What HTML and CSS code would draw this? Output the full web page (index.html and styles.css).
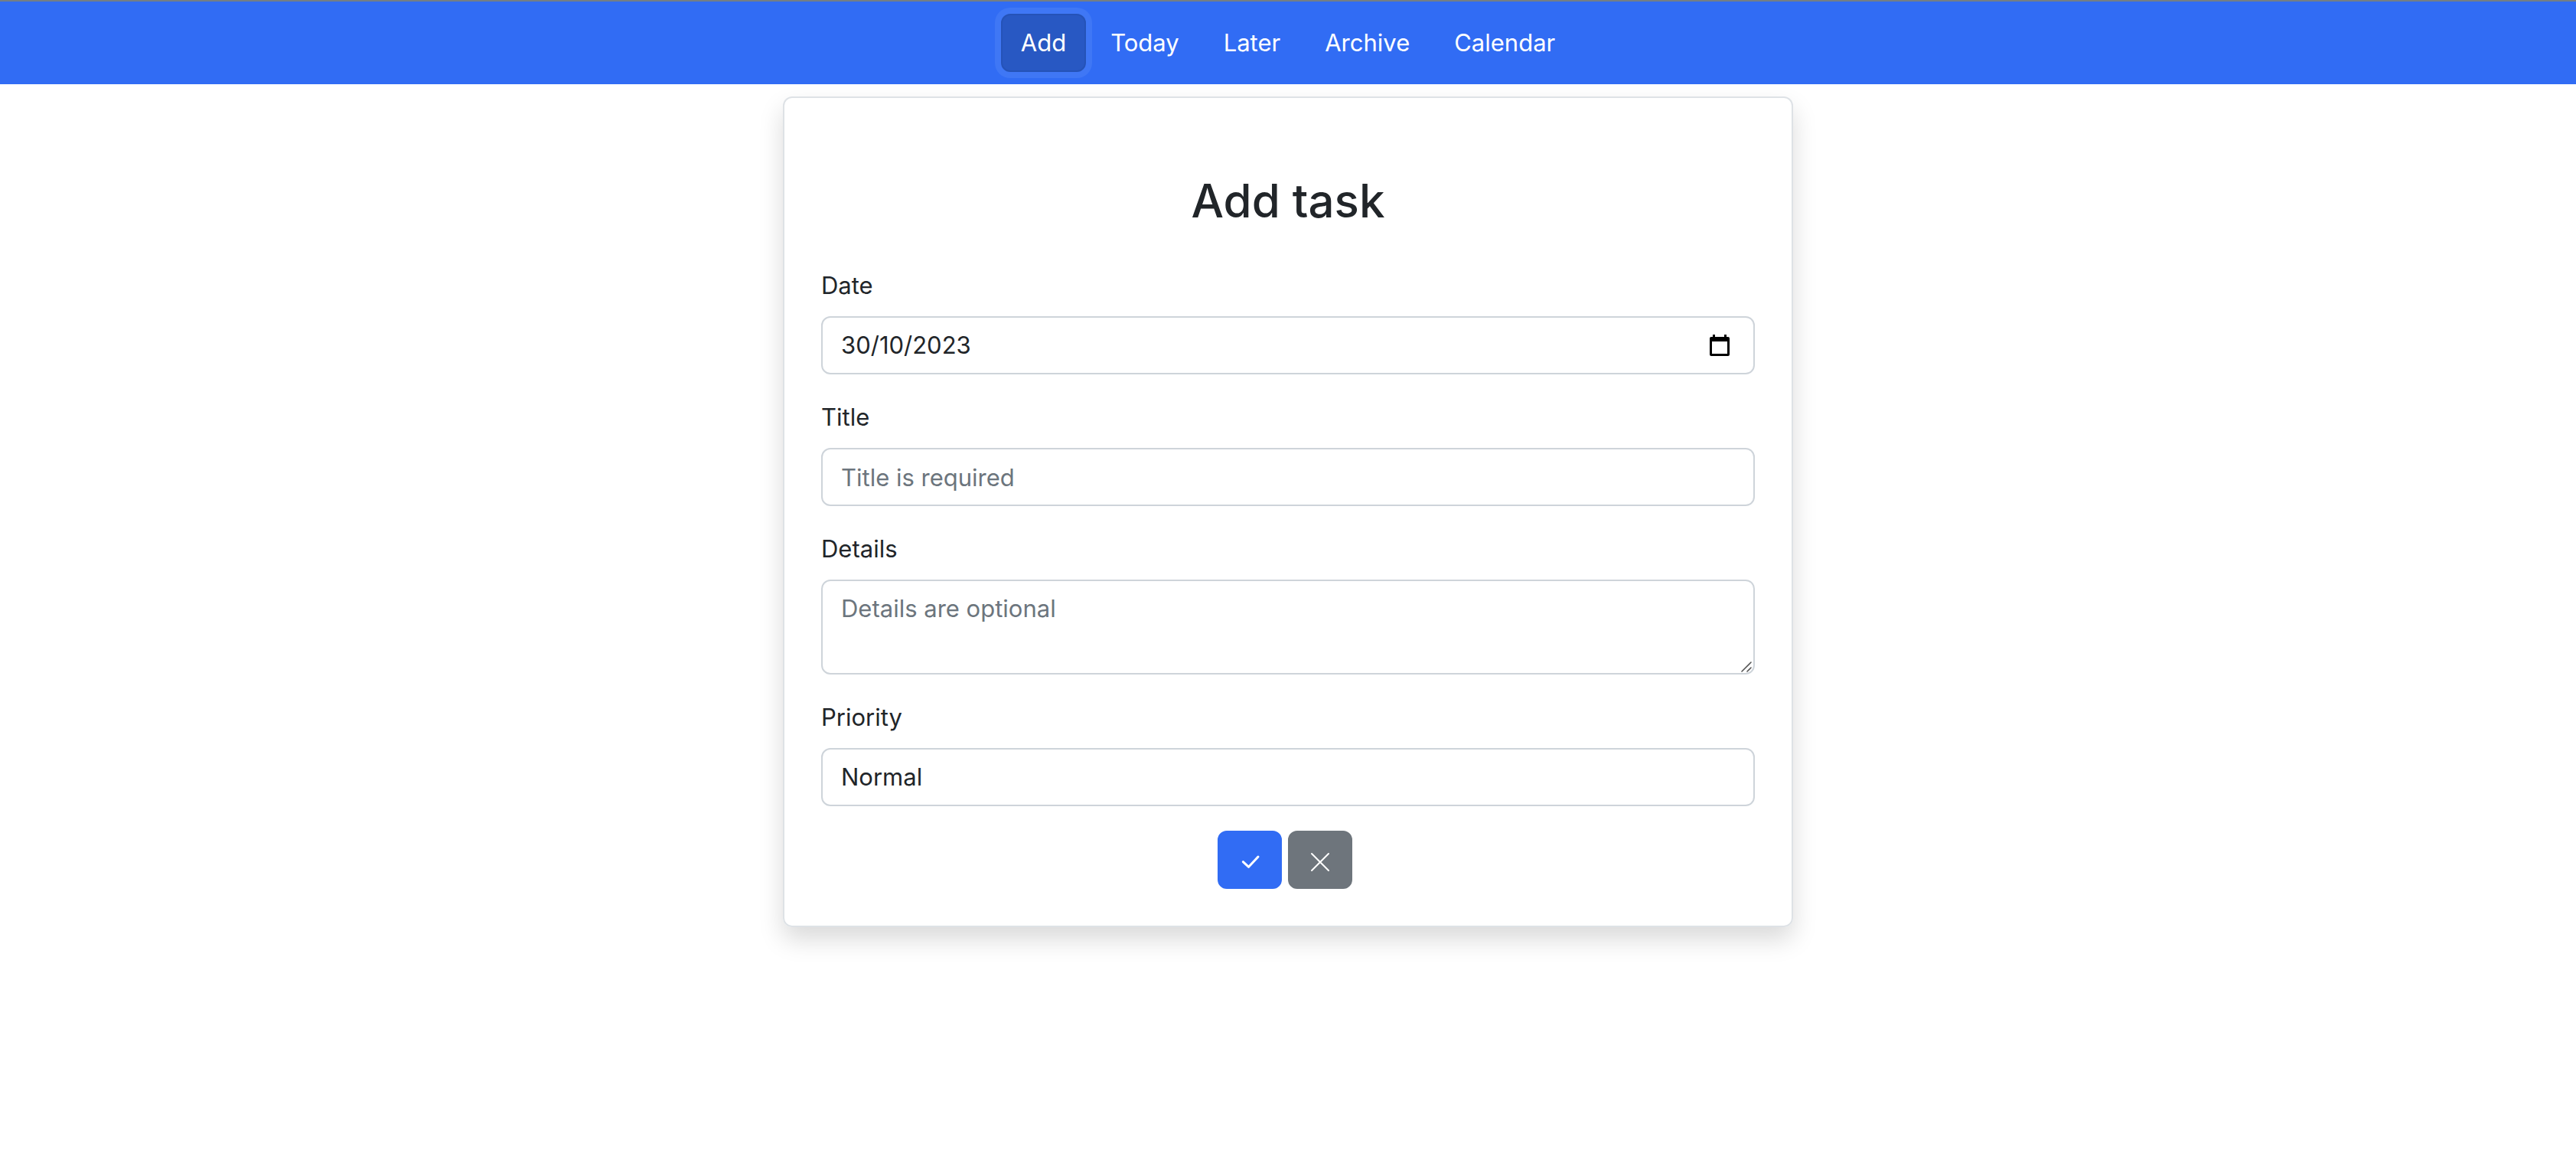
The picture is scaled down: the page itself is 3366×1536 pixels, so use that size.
FILE: index.html
```html
<!DOCTYPE html>
<html lang="en-GB">
<head>
<meta charset="utf-8">
<meta name="viewport" content="width=device-width, initial-scale=1">
<title>Add task</title>
<link rel="stylesheet" href="styles.css">
</head>
<body>
<nav class="navbar">
  <a class="nav-link active" href="#add" aria-current="page">Add</a>
  <a class="nav-link" href="#today">Today</a>
  <a class="nav-link" href="#later">Later</a>
  <a class="nav-link" href="#archive">Archive</a>
  <a class="nav-link" href="#calendar">Calendar</a>
</nav>
<main class="card">
  <h1 class="title">Add task</h1>
  <form class="form">
    <div class="field">
      <label class="label" for="date">Date</label>
      <div class="control date-group">
        <input class="date-input" id="date" type="text" value="30/10/2023">
        <button class="picker" type="button" aria-label="Show date picker">
          <svg width="26" height="28" viewBox="0 0 26 28" aria-hidden="true">
            <path fill="#000" fill-rule="evenodd" d="M4 0h3v3h12V0h3v3h2a2 2 0 0 1 2 2v21a2 2 0 0 1-2 2H2a2 2 0 0 1-2-2V5a2 2 0 0 1 2-2h2zM3 9v16h20V9z"/>
          </svg>
        </button>
      </div>
    </div>
    <div class="field">
      <label class="label" for="title">Title</label>
      <input class="control" id="title" type="text" placeholder="Title is required">
    </div>
    <div class="field">
      <label class="label" for="details">Details</label>
      <div class="area-wrap">
        <textarea class="control area" id="details" rows="2" placeholder="Details are optional"></textarea>
        <svg class="grip" width="14" height="14" viewBox="0 0 14 14" aria-hidden="true">
          <path d="M1 13 13 1M8 13l5-5" fill="none" stroke="#555" stroke-width="1.6" stroke-linecap="round"/>
        </svg>
      </div>
    </div>
    <div class="field">
      <label class="label" for="priority">Priority</label>
      <select class="control" id="priority">
        <option>Normal</option>
      </select>
    </div>
    <div class="actions">
      <button class="btn btn-primary" type="submit" aria-label="Save">
        <svg width="32" height="32" viewBox="0 0 32 32" aria-hidden="true">
          <path d="M7.300 18.700 14.600 25.300 27 12" fill="none" stroke="#fff" stroke-width="3" stroke-linecap="round" stroke-linejoin="round"/>
        </svg>
      </button>
      <button class="btn btn-secondary" type="button" aria-label="Cancel">
        <svg width="32" height="32" viewBox="0 0 32 32" aria-hidden="true">
          <path d="M5 8 27 30M27 8 5 30" fill="none" stroke="#fff" stroke-width="2" stroke-linecap="round"/>
        </svg>
      </button>
    </div>
  </form>
</main>
</body>
</html>
```
FILE: styles.css
```css
* {
  box-sizing: border-box;
}

body {
  min-height: 100vh;
  margin: 0;
  background: #fff;
  color: #212529;
  font-family: Inter, "Liberation Sans", sans-serif;
  font-size: 31px;
  line-height: 48px;
}

.navbar {
  display: flex;
  justify-content: center;
  gap: 6px;
  padding: 16px;
  border-top: 2px solid #747e84;
  background: #316cf4;
}

.nav-link {
  padding: 12px 24px;
  border: 2px solid transparent;
  border-radius: 12px;
  color: #fff;
  text-decoration: none;
}

.nav-link.active {
  background: #2858c3;
  border-color: #2553b8;
  box-shadow: 0 0 0 8px #3f77f5;
}

.card {
  width: 100%;
  max-width: 1320px;
  margin: 16px auto;
  padding: 48px;
  border: 2px solid #dee2e6;
  border-radius: 12px;
  box-shadow: 0 16px 32px rgba(0, 0, 0, 0.15);
}

.title {
  margin: 48px 0;
  font-size: 60px;
  font-weight: 500;
  line-height: 77px;
  text-align: center;
}

.form {
  display: flex;
  flex-direction: column;
  gap: 32px;
}

.field {
  display: flex;
  flex-direction: column;
  gap: 16px;
}

.control {
  display: block;
  width: 100%;
  height: 76px;
  padding: 12px 24px;
  border: 2px solid #ced4da;
  border-radius: 12px;
  background: #fff;
  color: #212529;
  font: inherit;
  appearance: none;
}

.control::placeholder {
  color: #6c757d;
  opacity: 1;
}

.date-group {
  display: flex;
  align-items: center;
  padding-right: 31px;
}

.date-input {
  flex: 1;
  min-width: 0;
  padding: 0;
  border: 0;
  background: none;
  color: inherit;
  font: inherit;
}

.picker {
  display: flex;
  padding: 0;
  border: 0;
  background: none;
}

.area-wrap {
  position: relative;
}

.area {
  height: 124px;
  resize: none;
}

.grip {
  position: absolute;
  right: 4px;
  bottom: 3px;
}

.actions {
  display: flex;
  justify-content: center;
}

.btn {
  display: flex;
  margin-right: 8px;
  padding: 20px 24px;
  border: 2px solid transparent;
  border-radius: 12px;
  color: #fff;
}

.btn-primary {
  background: #316cf4;
  border-color: #316cf4;
}

.btn-secondary {
  background: #6e757c;
  border-color: #6e757c;
}
```
